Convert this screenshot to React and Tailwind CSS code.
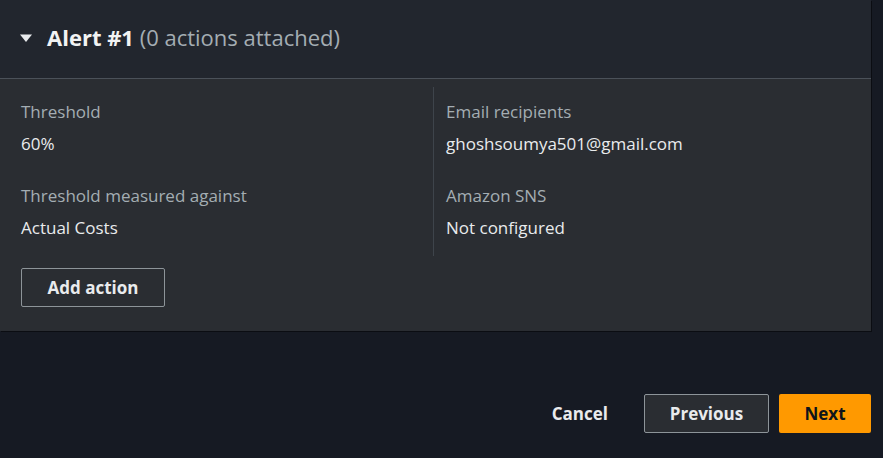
import React from 'react'

const font = { fontFamily: '"Open Sans", "Noto Sans", Arial, sans-serif' }

function Field({ label, value }) {
  return (
    <div className="flex flex-col gap-2">
      <div className="text-[17px] leading-6 text-[#a4adb3]">{label}</div>
      <div className="text-[17px] leading-6 text-[#e9ebed]">{value}</div>
    </div>
  )
}

export default function App() {
  return (
    <div className="w-[883px] h-[458px] bg-[#161a23] overflow-hidden" style={font}>
      <div className="w-[871px] bg-[#2a2d32] shadow-[1px_1px_0_#0b0d12]">
        {/* header */}
        <div className="h-[79px] bg-[#22262e] border-b border-[#4b5159] flex items-center pl-[19px] gap-[14px] pb-[4px]">
          <svg width="14" height="10" viewBox="0 0 14 10" className="mt-[2px]">
            <path d="M1 1.5 H13 L7 9 Z" fill="#e9ebed" />
          </svg>
          <div className="text-[22px] leading-7">
            <span className="font-bold text-[#f2f3f3]">Alert #1</span>
            <span className="text-[#a4adb3]"> (0 actions attached)</span>
          </div>
        </div>

        {/* body */}
        <div className="px-[21px] pt-2 pb-6">
          <div className="grid grid-cols-[412px_1fr]">
            <div className="pt-[13px] pb-4 flex flex-col gap-7">
              <Field label="Threshold" value="60%" />
              <Field label="Threshold measured against" value="Actual Costs" />
            </div>
            <div className="pt-[13px] pb-4 pl-[12px] border-l border-[#3e444b] flex flex-col gap-7">
              <Field label="Email recipients" value="ghoshsoumya501@gmail.com" />
              <Field label="Amazon SNS" value="Not configured" />
            </div>
          </div>
          <button className="mt-[12px] h-[39px] w-[144px] rounded-[2px] border border-[#8d9499] bg-[#2a2d32] text-[17px] font-bold text-[#e9ebed]">
            Add action
          </button>
        </div>
      </div>

      {/* footer */}
      <div className="w-[871px] mt-[63px] flex justify-end items-center">
        <button className="h-[39px] px-[18px] text-[17px] font-bold text-[#e9ebed] mr-[18px]">Cancel</button>
        <button className="h-[39px] w-[125px] rounded-[2px] border border-[#8d9499] bg-[#2a2d32] text-[17px] font-bold text-[#e9ebed]">
          Previous
        </button>
        <button className="ml-[10px] h-[39px] w-[92px] rounded-[2px] bg-[#ff9900] text-[17px] font-bold text-[#0f141a]">
          Next
        </button>
      </div>
    </div>
  )
}
